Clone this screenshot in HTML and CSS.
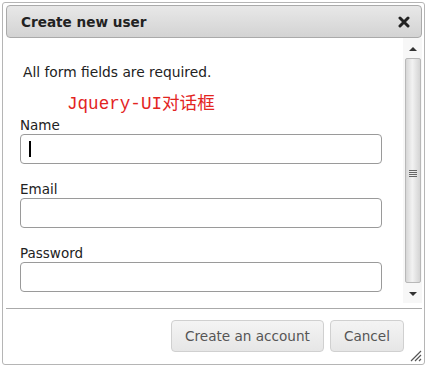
FILE: index.html
```html
<!DOCTYPE html>
<html lang="zh-CN">
<head>
    <meta charset="UTF-8">
    <title>Create new user</title>
    <link rel="stylesheet" href="styles.css">
</head>
<body>
    <div class="dialog">
        <div class="titlebar">
            <span class="title">Create new user</span>
            <svg class="close" width="12" height="12" viewBox="0 0 12 12">
                <path d="M2 2 L10 10 M10 2 L2 10" stroke="#222" stroke-width="3" stroke-linecap="round"/>
            </svg>
        </div>
        <div class="content">
            <div class="form">
                <p class="tips">All form fields are required.</p>
                <p class="note">Jquery-UI对话框</p>
                <label>Name</label>
                <div class="field focus"><span class="caret"></span></div>
                <label>Email</label>
                <div class="field"></div>
                <label>Password</label>
                <div class="field"></div>
            </div>
            <div class="scrollbar">
                <div class="arrow up"></div>
                <div class="thumb"><span class="grip"></span></div>
                <div class="arrow down"></div>
            </div>
        </div>
        <div class="buttonpane">
            <button class="btn">Create an account</button>
            <button class="btn">Cancel</button>
        </div>
        <svg class="resize" width="12" height="12" viewBox="0 0 12 12">
            <path d="M11 1 L1 11 M11 5 L5 11 M11 9 L9 11" stroke="#555" stroke-width="1.2"/>
        </svg>
    </div>
</body>
</html>
```

FILE: styles.css
```css
body {
    margin: 0;
    background: #fff;
    font-family: "DejaVu Sans", Verdana, sans-serif;
}
.dialog {
    position: relative;
    width: 423px;
    height: 363px;
    margin: 2px 0 0 2px;
    border: 1px solid #b5b5b5;
    border-radius: 3px;
    box-sizing: border-box;
    padding: 2px 2px 0 3px;
    display: flex;
    flex-direction: column;
}
.titlebar {
    height: 33px;
    box-sizing: border-box;
    border: 1px solid #aaa;
    border-radius: 4px;
    background: linear-gradient(#e8e8e8, #d3d3d3);
    display: flex;
    align-items: center;
    justify-content: space-between;
    padding: 0 11px 0 14px;
}
.title {
    font-weight: bold;
    font-size: 13.6px;
    color: #222;
}
.content {
    display: flex;
    height: 265px;
}
.form {
    flex: 1;
    padding: 0 20px 0 14px;
}
.tips {
    margin: 26px 0 0 3px;
    font-size: 13.8px;
    color: #222;
}
.note {
    margin: 9px 0 0 47px;
    font-family: "Liberation Mono", "Noto Sans CJK SC", monospace;
    font-size: 17.6px;
    color: #e3251f;
}
label {
    display: block;
    margin-top: 3px;
    font-size: 13.5px;
    color: #222;
}
.field {
    height: 30px;
    box-sizing: border-box;
    border: 1px solid #9a9a9a;
    border-radius: 4px;
    margin-top: 1px;
    margin-bottom: 17px;
    display: flex;
    align-items: center;
}
.caret {
    width: 2px;
    height: 16px;
    background: #000;
    margin-left: 8px;
}
.scrollbar {
    width: 19px;
    display: flex;
    flex-direction: column;
    align-items: center;
    background: #f7f7f7;
    border-left: 1px solid #fff;
}
.arrow {
    height: 18px;
    width: 100%;
    display: flex;
    align-items: center;
    justify-content: center;
}
.arrow.up::after {
    content: "";
    border: 4px solid transparent;
    border-bottom: 4px solid #333;
    border-top: 0;
    margin-top: 4px;
}
.arrow.down::after {
    content: "";
    border: 4px solid transparent;
    border-top: 4px solid #333;
    border-bottom: 0;
}
.thumb {
    flex: 1;
    width: 16px;
    box-sizing: border-box;
    border: 1px solid #b8b8b8;
    border-radius: 2px;
    background: linear-gradient(90deg, #d6d6d6, #f2f2f2 45%, #d4d4d4);
    display: flex;
    align-items: center;
    justify-content: center;
    margin: 2px 0;
}
.grip {
    width: 8px;
    height: 7px;
    background: repeating-linear-gradient(#666 0 1px, transparent 1px 2px);
    margin-top: 6px;
}
.buttonpane {
    border-top: 1px solid #aaa;
    margin-top: 5px;
    display: flex;
    justify-content: flex-end;
    gap: 6px;
    padding: 11px 18px 0 0;
}
.btn {
    height: 32px;
    border: 1px solid #d0d0d0;
    border-radius: 4px;
    background: linear-gradient(#f4f4f4, #e6e6e6);
    font-family: "DejaVu Sans", Verdana, sans-serif;
    font-size: 13.6px;
    color: #555;
    padding: 0 13px;
}
.resize {
    position: absolute;
    right: 2px;
    bottom: 2px;
}
```
